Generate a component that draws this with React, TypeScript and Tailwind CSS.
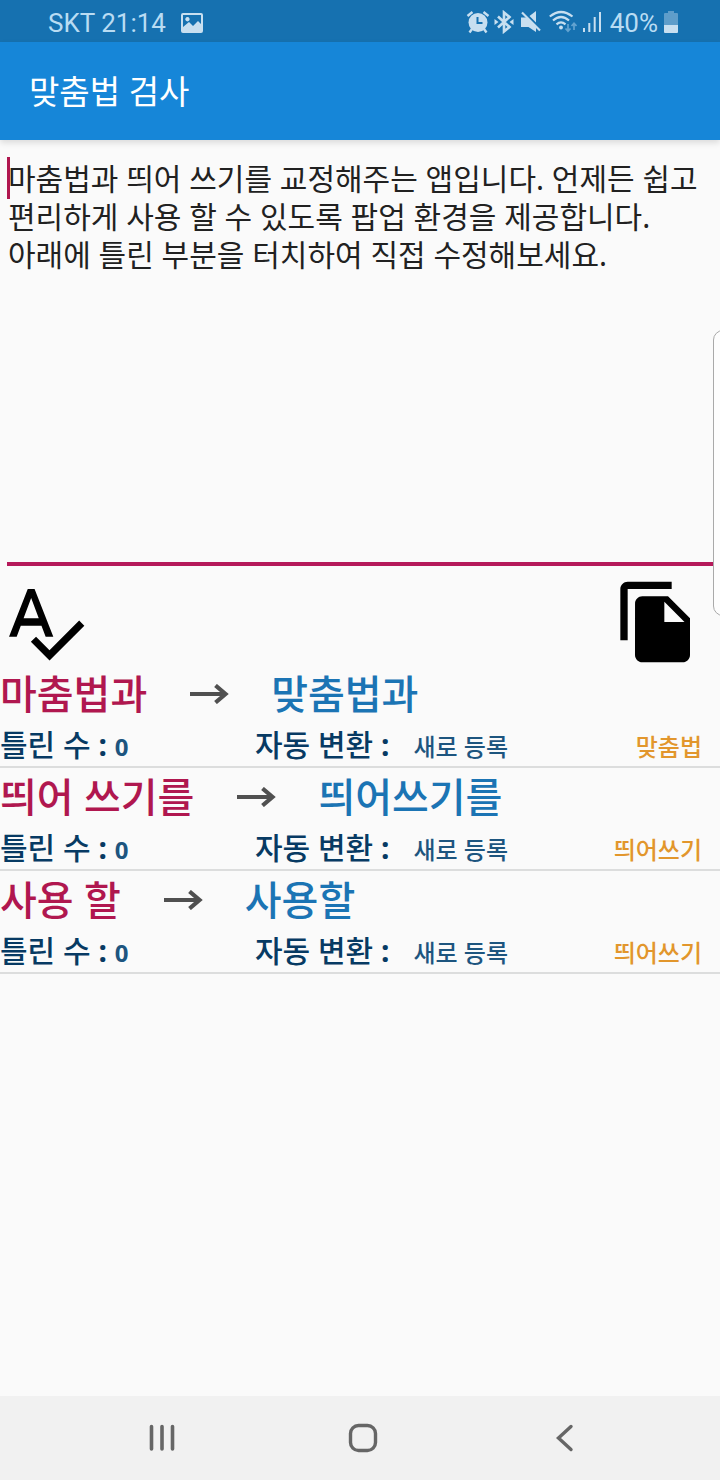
import { useState } from "react";

type Correction = {
  wrong: string;
  right: string;
  count: number;
  kind: string;
};

const corrections: Correction[] = [
  { wrong: "마춤법과", right: "맞춤법과", count: 0, kind: "맞춤법" },
  { wrong: "띄어 쓰기를", right: "띄어쓰기를", count: 0, kind: "띄어쓰기" },
  { wrong: "사용 할", right: "사용할", count: 0, kind: "띄어쓰기" },
];

const initialText =
  "마춤법과 띄어 쓰기를 교정해주는 앱입니다. 언제든 쉽고 편리하게 사용 할 수 있도록 팝업 환경을 제공합니다.\n아래에 틀린 부분을 터치하여 직접 수정해보세요.";

function StatusBar() {
  return (
    <div className="flex h-[42px] items-center justify-between bg-[#1671b0] pr-[42px] pl-12 font-[Roboto,sans-serif] text-[26px] leading-[42px] text-[#b9dcf3]">
      <div className="flex items-center gap-[15px]">
        <span className="pt-1">SKT 21:14</span>
        <svg className="mt-1 h-5 w-[22px]" viewBox="0 0 22 20" aria-hidden="true">
          <path
            fill="#c8dff0"
            fillRule="evenodd"
            d="M2 0H20Q22 0 22 2V18Q22 20 20 20H2Q0 20 0 18V2Q0 0 2 0ZM2 2V14L8 9L12 13L17 8L20 11V2ZM6.500 4A2.200 2.200 0 1 1 6.400 4Z"
          />
        </svg>
      </div>
      <div className="flex items-center">
        <svg className="mt-[2px] h-6 w-6" viewBox="0 0 24 24" aria-hidden="true">
          <circle cx="12" cy="12.500" r="9.500" fill="#c8dff0" />
          <path d="M11.500 7V13H16.500" fill="none" stroke="#1671b0" strokeWidth="2" />
          <path d="M1.500 6L6.500 2M22.500 6L17.500 2M6 19L3.500 22.500M18 19L20.500 22.500" stroke="#c8dff0" strokeWidth="2.400" />
        </svg>
        <svg className="mt-[2px] ml-1 h-6 w-5" viewBox="0 0 20 24" aria-hidden="true">
          <path d="M4 6.500L15.500 17L10 21.500V2.500L15.500 7L4 17.500" fill="none" stroke="#c8dff0" strokeWidth="2.600" />
          <path d="M0.500 9L4.500 12L0.500 15ZM19.500 9L15.500 12L19.500 15Z" fill="#c8dff0" />
        </svg>
        <svg className="mt-[2px] ml-[7px] h-6 w-5" viewBox="0 0 20 24" aria-hidden="true">
          <path d="M0 7.500H5.500L15 17V22L7.500 17H0ZM8.500 6L15 1V12.500Z" fill="#c8dff0" />
          <path d="M1 2.500L19 20.500" stroke="#c8dff0" strokeWidth="2.200" />
        </svg>
        <svg className="mt-[2px] ml-2 h-6 w-7" viewBox="0 0 28 24" aria-hidden="true">
          <g fill="none" stroke="#c8dff0" strokeWidth="2.200">
            <path d="M0.800 6.500Q12 -2.500 23.500 6.500" />
            <path d="M4 10.500Q12 3.500 20 10.500" />
            <path d="M7.500 14.300Q12 10.500 16.500 14.300" />
          </g>
          <circle cx="12" cy="17.500" r="1.900" fill="#c8dff0" />
          <path d="M19 14V21M16.500 18.500L19 21.200L21.500 18.500M25 20V13.500M22.500 16L25 13.300L27.500 16" fill="none" stroke="#63a3d0" strokeWidth="1.700" />
        </svg>
        <svg className="mt-[2px] ml-[6px] h-6 w-[18px]" viewBox="0 0 18 24" aria-hidden="true">
          <path d="M1 18V22M6.300 13V22M11.700 7V22M17 2V22" stroke="#c8dff0" strokeWidth="2" />
        </svg>
        <span className="ml-[9px] pt-1">40%</span>
        <svg className="mt-[2px] ml-[6px] h-[22px] w-[14px]" viewBox="0 0 14 22" aria-hidden="true">
          <path d="M4 0H10V2H13Q14 2 14 3V14H0V3Q0 2 1 2H4Z" fill="#5e9dca" />
          <path d="M0 14H14V21Q14 22 13 22H1Q0 22 0 21Z" fill="#c8dff0" />
        </svg>
      </div>
    </div>
  );
}

function Arrow() {
  return (
    <svg className="mx-[42px] h-5 w-10 shrink-0" viewBox="0 0 40 20" role="img" aria-label="→">
      <path d="M1 10H36" fill="none" stroke="#505050" strokeWidth="3.800" />
      <path d="M26.500 1.500L36.500 10L26.500 18.500" fill="none" stroke="#505050" strokeWidth="4.200" />
    </svg>
  );
}

function CorrectionRow({ item }: { item: Correction }) {
  return (
    <li className="border-b-2 border-[#dcdddd] font-medium">
      <button type="button" className="flex h-[58px] w-full items-center text-left text-[40px] leading-[58px]">
        <span className="text-[#b0174f]">{item.wrong}</span>
        <Arrow />
        <span className="text-[#1b74b4]">{item.right}</span>
      </button>
      <div className="grid h-[43px] grid-cols-[255px_1fr_auto] items-baseline pr-[18px] text-[24px] leading-[43px] text-[#1d557f]">
        <div>
          <span className="text-[30px] text-[#073a63]">
            틀린 수 <b>: </b>
          </span>
          <b>{item.count}</b>
        </div>
        <div className="flex items-baseline gap-6">
          <span className="text-[30px] text-[#073a63]">
            자동 변환 <b>:</b>
          </span>
          <button type="button">새로 등록</button>
        </div>
        <span className="text-[#e2962c]">{item.kind}</span>
      </div>
    </li>
  );
}

export default function App() {
  const [text, setText] = useState(initialText);

  return (
    <div className="relative flex min-h-screen flex-col overflow-hidden bg-[#fafafa] font-['Noto_Sans','Noto_Sans_CJK_KR',sans-serif]">
      <StatusBar />
      <header className="flex h-[98px] items-center bg-[#1686d8] px-[29px] pt-px shadow-[0_3px_6px_rgba(0,0,0,0.12)]">
        <h1 className="text-[33px] leading-[48px] text-white">맞춤법 검사</h1>
      </header>

      <main className="flex-1">
        <div className="relative px-[7px] pt-5">
          <span className="absolute top-[17px] left-[7px] h-[42px] w-[3px] bg-[#b0174f]" />
          <textarea
            aria-label="검사할 문장"
            value={text}
            onChange={(e) => setText(e.target.value)}
            spellCheck={false}
            className="block h-[406px] w-full resize-none overflow-hidden border-b-4 border-[#b5195a] bg-transparent pl-px text-[30px] leading-[38px] text-[#212121] outline-none"
          />
        </div>
        <div className="flex h-[99px] justify-between pt-3 pr-[19px]">
          <button type="button" aria-label="맞춤법 검사하기" className="h-[88px]">
            <svg className="h-[88px] w-[88px]" viewBox="0 0 24 24" aria-hidden="true">
              <path d="M12.450 16h2.090L9.430 3H7.570L2.460 16h2.090l1.120-3h5.640l1.140 3zm-6.020-5L8.500 5.480 10.570 11H6.430zm15.160.590l-8.090 8.090L9.830 16l-1.410 1.410 5.090 5.090L23 13l-1.410-1.410z" />
            </svg>
          </button>
          <button type="button" aria-label="복사" className="h-[88px]">
            <svg className="h-[88px] w-[88px]" viewBox="0 0 24 24" aria-hidden="true">
              <path d="M16 1H4c-1.100 0-2 .9-2 2v14h2V3h12V1zm-1 4l6 6v10c0 1.100-.9 2-2 2H7.990C6.890 23 6 22.100 6 21l.010-14c0-1.100.890-2 1.990-2h7zm-1 7h5.500L14 6.500V12z" />
            </svg>
          </button>
        </div>
        <ul>
          {corrections.map((item) => (
            <CorrectionRow key={item.wrong} item={item} />
          ))}
        </ul>
      </main>

      <div className="absolute top-[330px] -right-5 h-[286px] w-[27px] rounded-[10px] border border-[#a9a9a9] bg-[#fdfdfd]" />

      <nav className="grid h-[84px] grid-cols-3 place-items-center bg-[#f1f1f1] pr-[54px] pl-[61px]">
        <button type="button" aria-label="최근 앱">
          <svg className="h-8 w-8" viewBox="0 0 32 32" fill="none" stroke="#666" strokeWidth="3.600" strokeLinecap="round" aria-hidden="true">
            <path d="M5.500 4.500V27M16 4.500V27M26.500 4.500V27" />
          </svg>
        </button>
        <button type="button" aria-label="홈">
          <svg className="h-8 w-8" viewBox="0 0 32 32" fill="none" stroke="#666" strokeWidth="3.400" aria-hidden="true">
            <rect x="3.500" y="3.500" width="25" height="25" rx="8" />
          </svg>
        </button>
        <button type="button" aria-label="뒤로">
          <svg className="h-8 w-8" viewBox="0 0 32 32" fill="none" stroke="#666" strokeWidth="3.400" strokeLinecap="round" aria-hidden="true">
            <path d="M22 4.500L9.500 16L22 27.500" />
          </svg>
        </button>
      </nav>
    </div>
  );
}
